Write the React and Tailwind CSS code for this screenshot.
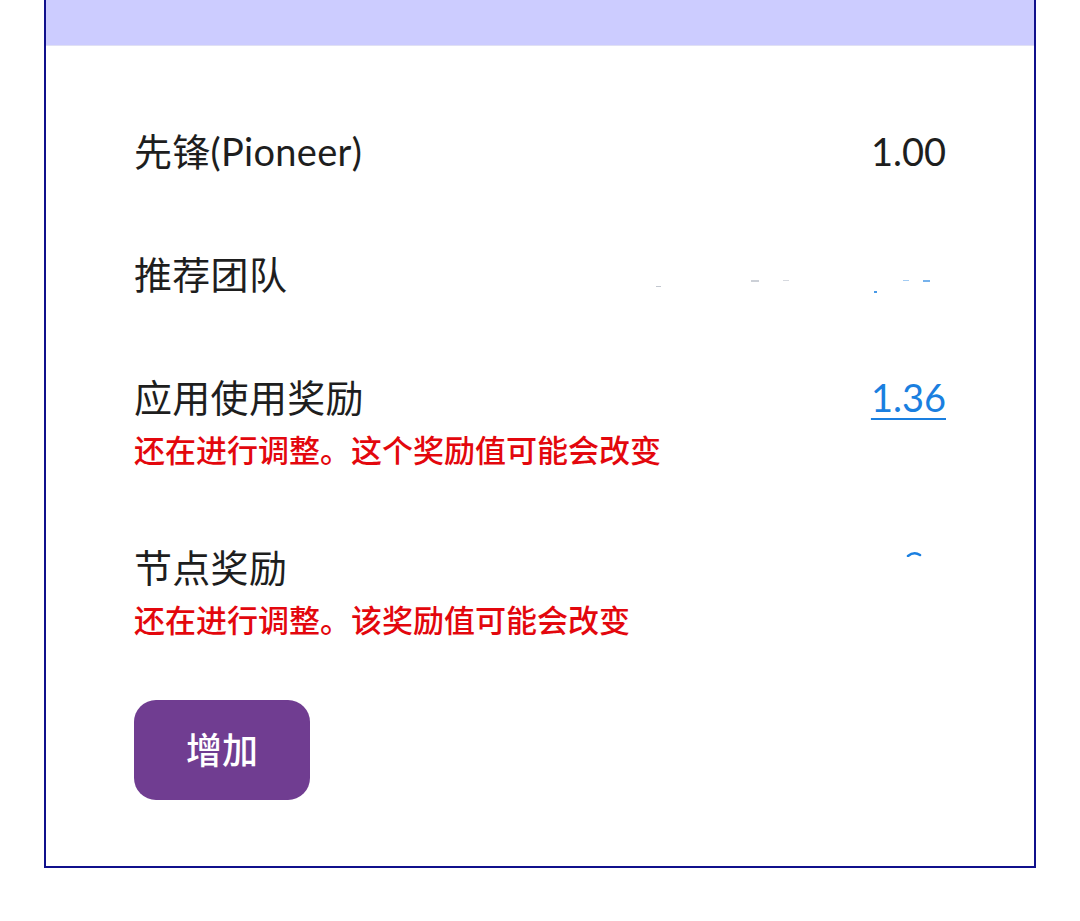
import React from 'react';

const rows = [
  { label: '先锋(Pioneer)', value: '1.00', gap: '' },
  { label: '推荐团队', value: null, mask: 'team', gap: 'mt-[75px]' },
  { label: '应用使用奖励', value: '1.36', link: true, note: '还在进行调整。这个奖励值可能会改变', gap: 'mt-[75px]' },
  { label: '节点奖励', value: null, mask: 'node', note: '还在进行调整。该奖励值可能会改变', gap: 'mt-[73px]' },
];

function Masked({ kind }) {
  // value is hidden in the screenshot, only faint traces remain
  if (kind === 'team') {
    return (
      <div className="flex h-[48px] w-[290px] items-start pt-[30px]">
        <span className="mt-[6px] h-[1px] w-[5px] bg-gray-400/60"></span>
        <span className="ml-[90px] h-[2px] w-[8px] bg-gray-400/50"></span>
        <span className="ml-[24px] h-[1px] w-[6px] bg-gray-400/40"></span>
        <span className="ml-[85px] mt-[11px] h-[2px] w-[3px] bg-[#1a7fe0]/80"></span>
        <span className="ml-[26px] h-[1px] w-[6px] bg-[#1a7fe0]/40"></span>
        <span className="ml-[14px] h-[2px] w-[7px] bg-[#1a7fe0]/60"></span>
      </div>
    );
  }
  return (
    <div className="flex h-[48px] w-[60px] items-start pt-[8px] pl-[20px]">
      <svg width="16" height="6" viewBox="0 0 16 6">
        <path d="M2 5 Q8 0 14 4" stroke="#1a7fe0" strokeWidth="2.5" fill="none" strokeLinecap="round" />
      </svg>
    </div>
  );
}

export default function App() {
  return (
    <div className="min-h-[921px] bg-white" style={{ fontFamily: '"Lato", "Noto Sans CJK SC", sans-serif' }}>
      <div className="mx-[44px] w-[992px] border-x-2 border-b-2 border-[#10108c] bg-white">
        <div className="h-[46px] bg-[#ccccff] border-b border-[#e0e0f4]"></div>

        <div className="flex flex-col px-[88px] pt-[81px] pb-[66px]">
          {rows.map((row, i) => (
            <div key={i} className={row.gap}>
              <div className="flex items-center justify-between h-[48px]">
                <span className="text-[38px] leading-[48px] tracking-[0.3px] text-[#1e1e1e]">{row.label}</span>
                {row.value ? (
                  <span
                    className={`text-[38px] leading-[48px] ${
                      row.link ? 'text-[#1a7fe0] underline underline-offset-[6px] decoration-2' : 'text-[#1e1e1e]'
                    }`}
                  >
                    {row.value}
                  </span>
                ) : (
                  <Masked kind={row.mask} />
                )}
              </div>
              {row.note && (
                <div className="mt-[9px] text-[31px] leading-[40px] font-medium text-[#e3070d]">{row.note}</div>
              )}
            </div>
          ))}

          <button className="mt-[60px] flex h-[100px] w-[176px] items-center justify-center rounded-[22px] bg-[#703d91] text-[36px] font-medium text-white">
            增加
          </button>
        </div>
      </div>
    </div>
  );
}
